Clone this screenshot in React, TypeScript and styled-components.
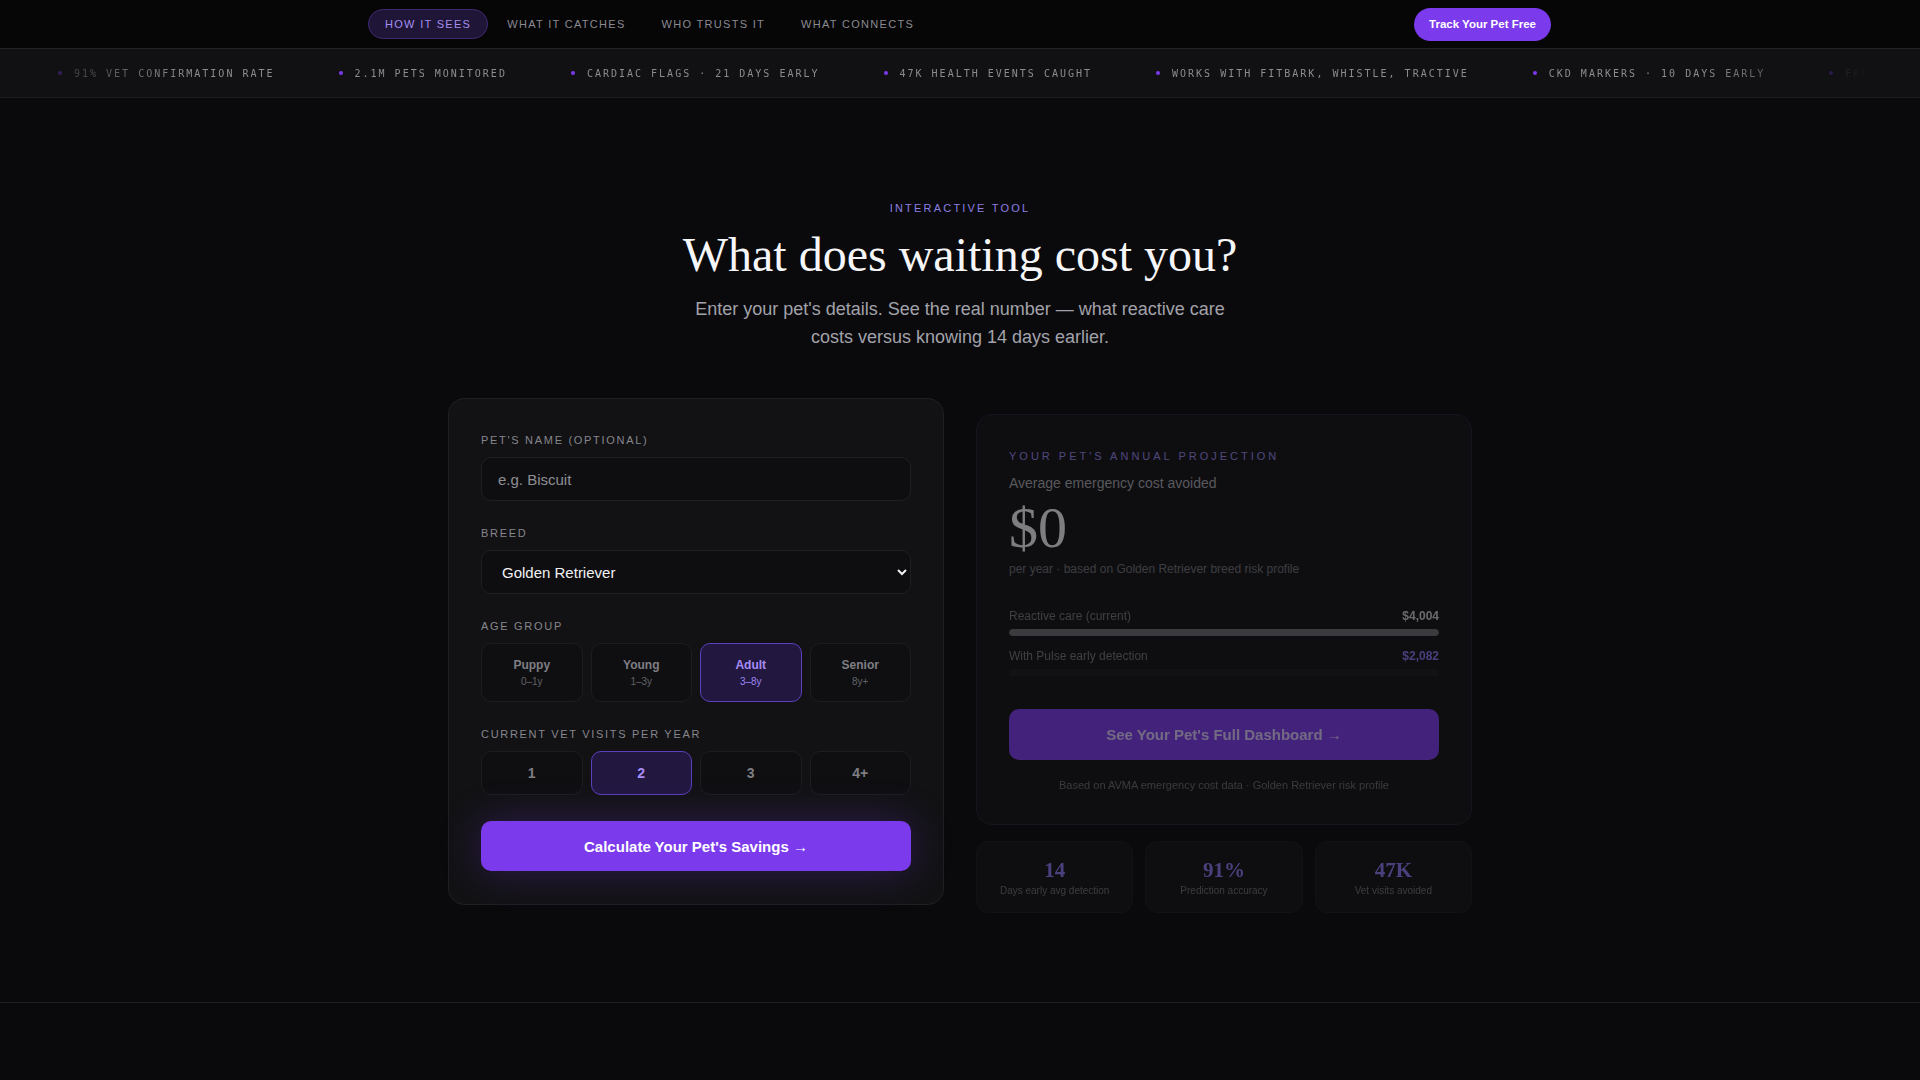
import styled, { createGlobalStyle } from 'styled-components';

const GlobalStyle = createGlobalStyle`
  * { box-sizing: border-box; }
  html, body {
    margin: 0;
    padding: 0;
    background: #0a0a0c;
  }
  body {
    font-family: "Liberation Sans", Arial, sans-serif;
    color: #ececf0;
  }
`;

/* top navigation */
const Nav = styled.nav`
  height: 48px;
  background: #060607;
  display: flex;
  justify-content: center;
`;

const NavInner = styled.div`
  width: 1200px;
  padding: 0 9px 0 8px;
  display: flex;
  align-items: center;
  justify-content: space-between;
`;

const NavLinks = styled.div`
  display: flex;
  align-items: center;
  gap: 2px;
`;

const NavLink = styled.a<{ $active?: boolean }>`
  height: 30px;
  display: flex;
  align-items: center;
  padding: 0 16px;
  border-radius: 999px;
  font-size: 11px;
  letter-spacing: 1.3px;
  text-transform: uppercase;
  text-decoration: none;
  color: ${(p) => (p.$active ? '#a58ff0' : '#8a8a90')};
  background: ${(p) => (p.$active ? '#1f1537' : 'transparent')};
  border: 1px solid ${(p) => (p.$active ? '#3d2a73' : 'transparent')};
`;

const CtaButton = styled.button`
  height: 33px;
  padding: 0 15px;
  border: none;
  border-radius: 999px;
  background: #7c3aed;
  color: #fff;
  font-family: inherit;
  font-size: 11.5px;
  font-weight: 700;
`;

/* scrolling stats ticker */
const Ticker = styled.div`
  height: 50px;
  background: #111114;
  border-top: 1px solid #232327;
  border-bottom: 1px solid #1d1d21;
  display: flex;
  align-items: center;
  overflow: hidden;
`;

const TickerTrack = styled.div`
  flex: 1;
  min-width: 0;
  display: flex;
  align-items: center;
  gap: 64px;
  padding-left: 58px;
  white-space: nowrap;
  overflow: hidden;
  mask-image: linear-gradient(90deg, transparent 0, #000 190px, #000 calc(100% - 220px), transparent calc(100% - 50px));
`;

const TickerItem = styled.div`
  display: flex;
  align-items: center;
  gap: 12px;
  font-family: "DejaVu Sans Mono", "Liberation Mono", monospace;
  font-size: 10px;
  letter-spacing: 2px;
  color: #8b8b91;
`;

const Dot = styled.span`
  width: 4px;
  height: 4px;
  border-radius: 50%;
  background: #7c3aed;
`;

/* calculator section */
const Section = styled.section`
  padding: 103px 0 89px;
  border-bottom: 1px solid #1e1e22;
`;

const Intro = styled.div`
  display: flex;
  flex-direction: column;
  align-items: center;
  text-align: center;
`;

const Eyebrow = styled.div`
  font-size: 11px;
  line-height: 14px;
  letter-spacing: 2.2px;
  text-transform: uppercase;
  color: #8c7fe2;
`;

const Title = styled.h2`
  margin: 12px 0 0;
  font-family: "Liberation Serif", "Times New Roman", serif;
  font-weight: 400;
  font-size: 48px;
  line-height: 55px;
  color: #f6f6f8;
`;

const Lead = styled.p`
  margin: 13px 0 0;
  max-width: 560px;
  font-size: 18px;
  line-height: 28px;
  color: #a2a2aa;
`;

const Grid = styled.div`
  width: 1024px;
  margin: 47px auto 0;
  display: grid;
  grid-template-columns: 1fr 1fr;
  gap: 32px;
  align-items: start;
`;

const FormCard = styled.div`
  background: #121214;
  border: 1px solid #1f1f23;
  border-radius: 16px;
  padding: 34px 32px 33px;
`;

const Field = styled.div`
  & + & {
    margin-top: 25px;
  }
`;

const Label = styled.div`
  font-size: 11px;
  line-height: 14px;
  letter-spacing: 1.7px;
  text-transform: uppercase;
  color: #86868d;
  margin-bottom: 10px;
`;

const TextInput = styled.input`
  width: 100%;
  height: 44px;
  padding: 0 16px;
  background: #0e0e10;
  border: 1px solid #1f1f23;
  border-radius: 10px;
  color: #f0f0f2;
  font-family: inherit;
  font-size: 15px;
  outline: none;

  &::placeholder {
    color: #8e8e95;
  }
`;

const Select = styled.select`
  width: 100%;
  height: 44px;
  padding: 0 8px 0 16px;
  background: #0e0e10;
  border: 1px solid #1f1f23;
  border-radius: 10px;
  color: #f2f2f4;
  color-scheme: dark;
  font-family: inherit;
  font-size: 15px;
  outline: none;
`;

const Options = styled.div`
  display: grid;
  grid-template-columns: repeat(4, 1fr);
  gap: 8px;
`;

const Choice = styled.button<{ $active?: boolean; $tall?: boolean }>`
  height: ${(p) => (p.$tall ? '59px' : '44px')};
  display: flex;
  flex-direction: column;
  align-items: center;
  justify-content: center;
  gap: 4px;
  border-radius: 10px;
  border: 1px solid ${(p) => (p.$active ? '#5b3fbf' : '#1d1d21')};
  background: ${(p) => (p.$active ? '#22183f' : '#0f0f11')};
  color: ${(p) => (p.$active ? '#a68cf6' : '#7e7e84')};
  font-family: inherit;
  padding: 0;
`;

const ChoiceTitle = styled.span<{ $big?: boolean }>`
  font-size: ${(p) => (p.$big ? '14px' : '12px')};
  font-weight: 700;
`;

const ChoiceSub = styled.span<{ $active?: boolean }>`
  font-size: 10px;
  color: ${(p) => (p.$active ? '#9b84ee' : '#626268')};
`;

const PrimaryButton = styled.button<{ $glow?: boolean }>`
  width: 100%;
  height: 50px;
  border: none;
  border-radius: 10px;
  background: #7c3aed;
  color: #fff;
  font-family: inherit;
  font-size: 15px;
  font-weight: 700;
  box-shadow: ${(p) => (p.$glow ? '0 0 40px rgba(124, 58, 237, 0.28)' : 'none')};
`;

const CalcButton = styled(PrimaryButton)`
  margin-top: 26px;
`;

/* projection column, mid fade-in */
const ResultColumn = styled.div`
  padding-top: 16px;
  opacity: 0.5;
  display: flex;
  flex-direction: column;
  gap: 16px;
`;

const ResultCard = styled.div`
  background: #131316;
  border: 1px solid #221e33;
  border-radius: 16px;
  padding: 34px 32px 32px;
`;

const ResultEyebrow = styled.div`
  font-size: 11px;
  line-height: 14px;
  letter-spacing: 3px;
  text-transform: uppercase;
  color: #9685e6;
`;

const ResultCaption = styled.div`
  margin-top: 10px;
  font-size: 14px;
  line-height: 20px;
  color: #a6a6ad;
`;

const BigValue = styled.div`
  margin-top: 6px;
  font-family: "Liberation Serif", "Times New Roman", serif;
  font-size: 58px;
  line-height: 58px;
  color: #f2f2f4;
`;

const SmallNote = styled.div`
  margin-top: 4px;
  font-size: 12px;
  line-height: 16px;
  color: #707077;
`;

const Compare = styled.div`
  margin-top: 31px;
  display: flex;
  flex-direction: column;
  gap: 12px;
`;

const CompareRow = styled.div`
  display: flex;
  justify-content: space-between;
  font-size: 12px;
  line-height: 16px;
  color: #75757c;
`;

const CompareValue = styled.span<{ $accent?: boolean }>`
  font-weight: 700;
  color: ${(p) => (p.$accent ? '#8a74ee' : '#cacad0')};
`;

const Bar = styled.div`
  margin-top: 5px;
  height: 7px;
  border-radius: 4px;
  background: #1a1a1e;
  overflow: hidden;
`;

const BarFill = styled.div<{ $tone: string }>`
  height: 100%;
  border-radius: 4px;
  background: ${(p) => p.$tone};
`;

const DashButton = styled(PrimaryButton)`
  margin-top: 33px;
  height: 51px;
  color: rgba(255, 255, 255, 0.72);
`;

const Source = styled.div`
  margin-top: 18px;
  text-align: center;
  font-size: 11px;
  line-height: 14px;
  color: #6a6a70;
`;

const Stats = styled.div`
  display: grid;
  grid-template-columns: repeat(3, 1fr);
  gap: 12px;
`;

const StatCard = styled.div`
  height: 72px;
  border-radius: 12px;
  background: #131316;
  border: 1px solid #1b1b1f;
  display: flex;
  flex-direction: column;
  align-items: center;
  justify-content: center;
  gap: 3px;
`;

const StatValue = styled.div`
  font-family: "Liberation Serif", "Times New Roman", serif;
  font-weight: 700;
  font-size: 21px;
  line-height: 24px;
  color: #8a76ee;
`;

const StatLabel = styled.div`
  font-size: 10px;
  line-height: 12px;
  color: #6e6e74;
`;

const navLinks = ['How it sees', 'What it catches', 'Who trusts it', 'What connects'];

const tickerItems = [
  '91% VET CONFIRMATION RATE',
  '2.1M PETS MONITORED',
  'CARDIAC FLAGS · 21 DAYS EARLY',
  '47K HEALTH EVENTS CAUGHT',
  'WORKS WITH FITBARK, WHISTLE, TRACTIVE',
  'CKD MARKERS · 10 DAYS EARLY',
  'FREE FOR',
];

const ages = [
  { name: 'Puppy', range: '0–1y' },
  { name: 'Young', range: '1–3y' },
  { name: 'Adult', range: '3–8y' },
  { name: 'Senior', range: '8y+' },
];

const visits = ['1', '2', '3', '4+'];

const stats = [
  { value: '14', label: 'Days early avg detection' },
  { value: '91%', label: 'Prediction accuracy' },
  { value: '47K', label: 'Vet visits avoided' },
];

const reactive = 4004;
const withPulse = 2082;

export default function App() {
  return (
    <>
      <GlobalStyle />
      <Nav>
        <NavInner>
          <NavLinks>
            {navLinks.map((l, i) => (
              <NavLink key={l} href="#" $active={i === 0}>
                {l}
              </NavLink>
            ))}
          </NavLinks>
          <CtaButton>Track Your Pet Free</CtaButton>
        </NavInner>
      </Nav>

      <Ticker>
        <TickerTrack>
          {tickerItems.map((t) => (
            <TickerItem key={t}>
              <Dot />
              {t}
            </TickerItem>
          ))}
        </TickerTrack>
      </Ticker>

      <Section>
        <Intro>
          <Eyebrow>Interactive Tool</Eyebrow>
          <Title>What does waiting cost you?</Title>
          <Lead>
            Enter your pet's details. See the real number — what reactive care costs versus knowing 14 days
            earlier.
          </Lead>
        </Intro>

        <Grid>
          <FormCard>
            <Field>
              <Label>Pet's name (optional)</Label>
              <TextInput placeholder="e.g. Biscuit" />
            </Field>
            <Field>
              <Label>Breed</Label>
              <Select defaultValue="golden">
                <option value="golden">Golden Retriever</option>
                <option value="lab">Labrador Retriever</option>
                <option value="shepherd">German Shepherd</option>
              </Select>
            </Field>
            <Field>
              <Label>Age group</Label>
              <Options>
                {ages.map((a) => (
                  <Choice key={a.name} $tall $active={a.name === 'Adult'}>
                    <ChoiceTitle>{a.name}</ChoiceTitle>
                    <ChoiceSub $active={a.name === 'Adult'}>{a.range}</ChoiceSub>
                  </Choice>
                ))}
              </Options>
            </Field>
            <Field>
              <Label>Current vet visits per year</Label>
              <Options>
                {visits.map((v) => (
                  <Choice key={v} $active={v === '2'}>
                    <ChoiceTitle $big>{v}</ChoiceTitle>
                  </Choice>
                ))}
              </Options>
            </Field>
            <CalcButton $glow>Calculate Your Pet's Savings →</CalcButton>
          </FormCard>

          <ResultColumn>
            <ResultCard>
              <ResultEyebrow>Your Pet's Annual Projection</ResultEyebrow>
              <ResultCaption>Average emergency cost avoided</ResultCaption>
              <BigValue>$0</BigValue>
              <SmallNote>per year · based on Golden Retriever breed risk profile</SmallNote>
              <Compare>
                <div>
                  <CompareRow>
                    <span>Reactive care (current)</span>
                    <CompareValue>${reactive.toLocaleString('en-US')}</CompareValue>
                  </CompareRow>
                  <Bar>
                    <BarFill $tone="#6c6c72" style={{ width: '100%' }} />
                  </Bar>
                </div>
                <div>
                  <CompareRow>
                    <span>With Pulse early detection</span>
                    <CompareValue $accent>${withPulse.toLocaleString('en-US')}</CompareValue>
                  </CompareRow>
                  <Bar>
                    <BarFill $tone="#7c3aed" style={{ width: '0%' }} />
                  </Bar>
                </div>
              </Compare>
              <DashButton>See Your Pet's Full Dashboard →</DashButton>
              <Source>Based on AVMA emergency cost data · Golden Retriever risk profile</Source>
            </ResultCard>
            <Stats>
              {stats.map((s) => (
                <StatCard key={s.label}>
                  <StatValue>{s.value}</StatValue>
                  <StatLabel>{s.label}</StatLabel>
                </StatCard>
              ))}
            </Stats>
          </ResultColumn>
        </Grid>
      </Section>
    </>
  );
}
